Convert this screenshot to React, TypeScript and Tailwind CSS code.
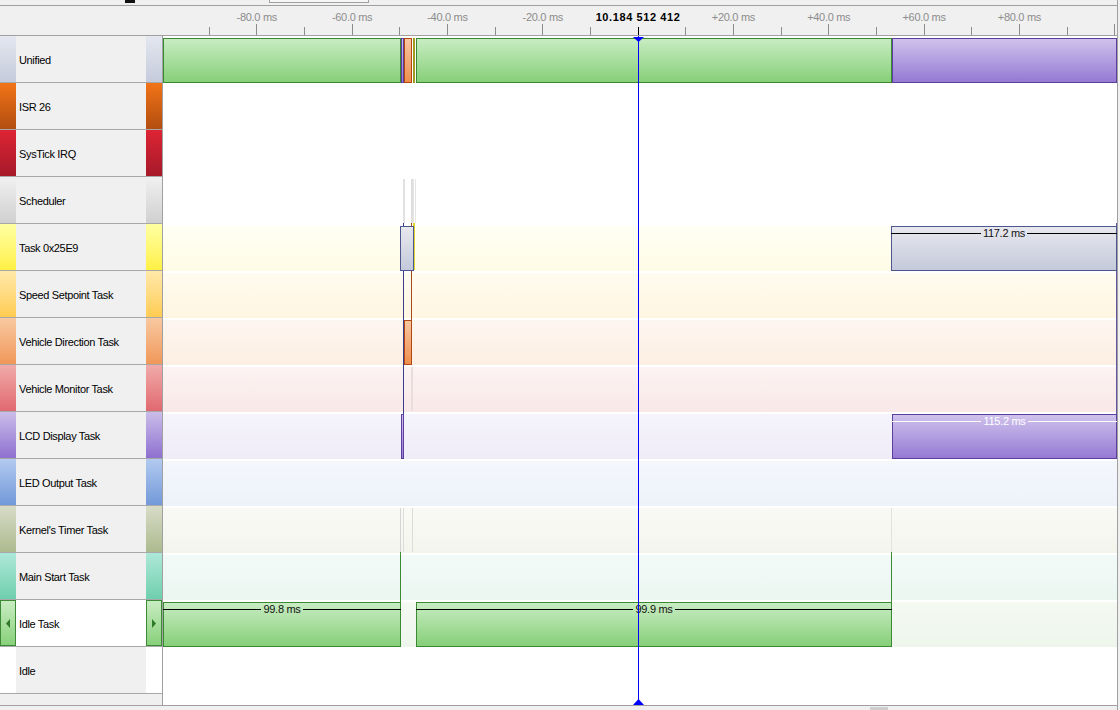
import React from "react";

type Row = { name: string; strip: string; tint: string };

const rows: Row[] = [
  { name: "Unified", strip: "bg-linear-to-b from-[#e4e7ef] to-[#c5cbdc]", tint: "bg-white" },
  { name: "ISR 26", strip: "bg-linear-to-b from-[#f27418] to-[#b24e10]", tint: "bg-white" },
  { name: "SysTick IRQ", strip: "bg-linear-to-b from-[#de2434] to-[#a61a2a]", tint: "bg-white" },
  { name: "Scheduler", strip: "bg-linear-to-b from-[#f0f0f0] to-[#d0d0d0]", tint: "bg-white" },
  { name: "Task 0x25E9", strip: "bg-linear-to-b from-[#ffffa0] to-[#fff040]", tint: "bg-linear-to-b from-[#fffff4] to-[#fffce6]" },
  { name: "Speed Setpoint Task", strip: "bg-linear-to-b from-[#ffe8a8] to-[#ffcc50]", tint: "bg-linear-to-b from-[#fffbf0] to-[#fff6e2]" },
  { name: "Vehicle Direction Task", strip: "bg-linear-to-b from-[#f8c8a0] to-[#f09858]", tint: "bg-linear-to-b from-[#fdf6f0] to-[#fdefe2]" },
  { name: "Vehicle Monitor Task", strip: "bg-linear-to-b from-[#f0aaaa] to-[#e06870]", tint: "bg-linear-to-b from-[#fcf3f2] to-[#f9e8e8]" },
  { name: "LCD Display Task", strip: "bg-linear-to-b from-[#cbbde9] to-[#8f70cf]", tint: "bg-linear-to-b from-[#f5f3fb] to-[#efecf8]" },
  { name: "LED Output Task", strip: "bg-linear-to-b from-[#b2caf0] to-[#7299d8]", tint: "bg-linear-to-b from-[#f4f7fc] to-[#edf2fa]" },
  { name: "Kernel's Timer Task", strip: "bg-linear-to-b from-[#d8dcc8] to-[#adba8e]", tint: "bg-linear-to-b from-[#f9faf5] to-[#f3f5ed]" },
  { name: "Main Start Task", strip: "bg-linear-to-b from-[#ade8d8] to-[#6ecfae]", tint: "bg-linear-to-b from-[#f2faf7] to-[#ebf6f1]" },
  { name: "Idle Task", strip: "", tint: "bg-linear-to-b from-[#f4f9f2] to-[#eef6ec]" },
  { name: "Idle", strip: "bg-white", tint: "bg-white" },
];

const GREEN = "border border-[#3b8a33] bg-linear-to-b from-[#c8ecc2] to-[#86cf78]";
const PURPLE = "border border-[#5b3f9e] bg-linear-to-b from-[#cfc2ec] to-[#9679d3]";
const ORANGE = "border border-[#b04810] bg-linear-to-b from-[#f8c6a0] to-[#ee8e4c]";
const GRAY = "border border-[#4e5690] bg-linear-to-b from-[#e8e8ee] to-[#c4cadb]";
const YELLOW = "border-x border-[#a09a20] bg-[#ece040]";

type Bar = { l: number; t: number; w: number; h: number; cls: string; label?: string; dark?: boolean };
const rowTop = (i: number) => i * 47 + 2;
const bars: Bar[] = [
  { l: 0, t: rowTop(0), w: 238, h: 45, cls: GREEN },
  { l: 238, t: rowTop(0), w: 3, h: 45, cls: PURPLE },
  { l: 241, t: rowTop(0), w: 8, h: 45, cls: ORANGE },
  { l: 250, t: rowTop(0), w: 2, h: 45, cls: YELLOW },
  { l: 253, t: rowTop(0), w: 476, h: 45, cls: GREEN },
  { l: 729, t: rowTop(0), w: 225, h: 45, cls: PURPLE },
  { l: 237, t: rowTop(4), w: 14, h: 45, cls: GRAY },
  { l: 728, t: rowTop(4), w: 226, h: 45, cls: GRAY, label: "117.2 ms", dark: true },
  { l: 241, t: rowTop(6), w: 8, h: 45, cls: ORANGE },
  { l: 238, t: rowTop(8), w: 3, h: 45, cls: PURPLE },
  { l: 729, t: rowTop(8), w: 225, h: 45, cls: PURPLE, label: "115.2 ms", dark: false },
  { l: 0, t: rowTop(12), w: 238, h: 45, cls: GREEN, label: "99.8 ms", dark: true },
  { l: 253, t: rowTop(12), w: 476, h: 45, cls: GREEN, label: "99.9 ms", dark: true },
];

type Line = { l: number; t: number; h: number; w?: number; cls: string };
const lines: Line[] = [
  { l: 240, t: 143, h: 44, w: 2, cls: "bg-[#e2e2e2]" },
  { l: 248, t: 143, h: 44, w: 2, cls: "bg-[#dedede]" },
  { l: 250, t: 143, h: 44, w: 1, cls: "bg-[#e6e6e6]" },
  { l: 252, t: 143, h: 44, w: 1, cls: "bg-[#e6e6e6]" },
  { l: 240, t: 187, h: 191, cls: "bg-[#3c3c8c]" },
  { l: 248, t: 187, h: 97, cls: "bg-[#a84818]" },
  { l: 250, t: 187, h: 47, w: 2, cls: "bg-[#e0d430]" },
  { l: 248, t: 331, h: 44, w: 2, cls: "bg-[#e8dcdc]" },
  { l: 237, t: 472, h: 44, cls: "bg-[#d4d4d4]" },
  { l: 240, t: 472, h: 44, cls: "bg-[#dcdcdc]" },
  { l: 249, t: 472, h: 44, cls: "bg-[#dcdcdc]" },
  { l: 728, t: 472, h: 44, cls: "bg-[#e2e2e2]" },
  { l: 237, t: 516, h: 86, cls: "bg-[#3b8a33]" },
  { l: 728, t: 516, h: 86, cls: "bg-[#3b8a33]" },
  { l: 953, t: 187, h: 235, cls: "bg-[#6454a4]" },
];

const PXMS = 4.7665;
const X0 = 637.6 - 163;
const major = [-80, -60, -40, -20, 0, 20, 40, 60, 80, 100];
const minor = [-90, -70, -50, -30, -10, 10, 30, 50, 70, 90];

function BarView({ b }: { b: Bar }) {
  return (
    <div
      className={`absolute box-border ${b.cls}`}
      style={{ left: b.l, top: b.t, width: b.w, height: b.h }}
    >
      {b.label && (
        <div className="absolute left-[-1px] right-[-1px] top-0 h-[12px] flex items-center">
          <div className={`flex-1 h-px ${b.dark ? "bg-black" : "bg-white"}`} />
          <span
            className={`px-[2px] leading-[12px] text-[11px] tracking-[-0.3px] whitespace-nowrap ${
              b.dark ? "text-[#111]" : "text-white"
            }`}
          >
            {b.label}
          </span>
          <div className={`flex-1 h-px ${b.dark ? "bg-black" : "bg-white"}`} />
        </div>
      )}
    </div>
  );
}

function Arrow({ dir }: { dir: "l" | "r" }) {
  return (
    <svg width="4" height="9" viewBox="0 0 4 9">
      {dir === "l" ? (
        <polygon points="4,0 4,9 0,4.5" fill="#2f7a2a" />
      ) : (
        <polygon points="0,0 0,9 4,4.5" fill="#2f7a2a" />
      )}
    </svg>
  );
}

export default function App() {
  return (
    <div className="w-[1120px] h-[710px] bg-[#f0f0f0] overflow-hidden font-['Liberation_Sans',Arial,sans-serif] text-[11px] text-black">
      <div className="w-[1118px] h-full border-r border-[#a0a0a0] flex flex-col">
        <div className="h-[6px] border-b border-[#a0a0a0] flex items-start shrink-0">
          <div className="ml-[125px] w-[10px] h-[3px] bg-[#111]" />
          <div className="ml-[134px] w-[98px] h-[2px] border-x border-b border-[#a0a0a0] bg-[#f6f6f6] box-content" />
        </div>
        <div className="h-[30px] border-b border-[#a0a0a0] flex shrink-0">
          <div className="w-[163px]" />
          <div className="flex-1 relative">
            {major.map((m) => (
              <div
                key={"M" + m}
                className={`absolute w-px ${m === 0 ? "bg-black top-[21px] h-[8px]" : "bg-[#8c8c8c] top-[18px] h-[11px]"}`}
                style={{ left: Math.round(X0 + m * PXMS) }}
              />
            ))}
            {minor.map((m) => (
              <div
                key={"m" + m}
                className="absolute w-px bg-[#8c8c8c] top-[21px] h-[8px]"
                style={{ left: Math.round(X0 + m * PXMS) }}
              />
            ))}
            {major
              .filter((m) => m !== 100)
              .map((m) => (
                <div
                  key={"L" + m}
                  className={`absolute top-[5px] leading-[13px] whitespace-nowrap -translate-x-1/2 ${
                    m === 0 ? "font-bold text-black tracking-[0.6px]" : "text-[#8c8c8c] tracking-[-0.3px]"
                  }`}
                  style={{ left: X0 + m * PXMS + 0.5 }}
                >
                  {m === 0 ? "10.184 512 412" : `${m > 0 ? "+" : ""}${m}.0 ms`}
                </div>
              ))}
          </div>
        </div>
        <div className="h-[670px] border-b border-[#a0a0a0] flex shrink-0">
          <div className="w-[163px] border-r border-[#a0a0a0] flex flex-col">
            {rows.map((r) => {
              const idleTask = r.name === "Idle Task";
              return (
                <div key={r.name} className="h-[47px] border-b border-[#a8a8a8] flex shrink-0">
                  {idleTask ? (
                    <div className="w-[16px] border border-[#3d8a36] bg-linear-to-b from-[#c8ecc2] to-[#88d07a] flex items-center justify-center">
                      <Arrow dir="l" />
                    </div>
                  ) : (
                    <div className={`w-[16px] ${r.strip}`} />
                  )}
                  <div
                    className={`flex-1 flex items-center pl-[3px] pt-[2px] tracking-[-0.35px] ${
                      idleTask ? "bg-white" : "bg-[#f0f0f0]"
                    }`}
                  >
                    {r.name}
                  </div>
                  {idleTask ? (
                    <div className="w-[16px] border border-[#3d8a36] bg-linear-to-b from-[#c8ecc2] to-[#88d07a] flex items-center justify-center">
                      <Arrow dir="r" />
                    </div>
                  ) : (
                    <div className={`w-[16px] ${r.strip}`} />
                  )}
                </div>
              );
            })}
            <div className="flex-1 bg-[#f0f0f0]" />
          </div>
          <div className="flex-1 relative bg-white overflow-hidden">
            <div className="flex flex-col">
              {rows.map((r) => (
                <div key={r.name} className="h-[47px] pt-[2px] shrink-0">
                  <div className={`h-[45px] ${r.tint}`} />
                </div>
              ))}
            </div>
            {lines.map((ln, i) => (
              <div
                key={"ln" + i}
                className={`absolute ${ln.cls}`}
                style={{ left: ln.l, top: ln.t, height: ln.h, width: ln.w ?? 1 }}
              />
            ))}
            {bars.map((b, i) => (
              <BarView key={"b" + i} b={b} />
            ))}
            <div className="absolute top-0 bottom-0 left-[475px] w-px bg-[#0000ff]" />
            <svg className="absolute left-[470px] top-[1px]" width="11" height="5" viewBox="0 0 11 5">
              <polygon points="0,0 11,0 5.5,5" fill="#0000ff" />
            </svg>
            <svg className="absolute left-[470px] top-[663px]" width="11" height="6" viewBox="0 0 11 6">
              <polygon points="0,6 11,6 5.5,0" fill="#0000ff" />
            </svg>
          </div>
        </div>
        <div className="flex-1 flex items-end">
          <div className="ml-[870px] w-[18px] h-[3px] bg-[#cdcdcd]" />
        </div>
      </div>
    </div>
  );
}
